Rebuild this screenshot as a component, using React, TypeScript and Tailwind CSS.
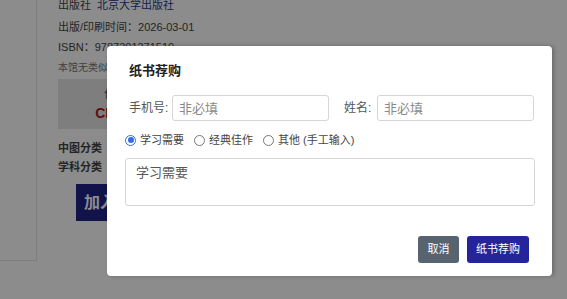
import React from "react";

const font = { fontFamily: '"Liberation Sans", "Noto Sans CJK SC", sans-serif' };

const Radio = ({ checked, label }: { checked?: boolean; label: string }) => (
  <label className="flex items-center gap-[4px] text-[11px] text-[#444]">
    <span
      className={
        checked
          ? "w-[11px] h-[11px] rounded-full border border-[#2f6fe0] flex items-center justify-center bg-white"
          : "w-[11px] h-[11px] rounded-full border border-[#777] bg-white"
      }
    >
      {checked && <span className="w-[6px] h-[6px] rounded-full bg-[#2f6fe0]" />}
    </span>
    {label}
  </label>
);

export default function App() {
  return (
    <div className="relative w-[567px] h-[299px] overflow-hidden bg-white" style={font}>
      {/* page behind */}
      <div className="flex h-[261px]">
        <div className="w-[37px] border-r border-b border-[#e5e5e5]" />
        <div className="pl-[21px] flex flex-col text-[11px] text-[#444]">
          <div className="h-[19px] -mt-[4px] flex items-center">
            出版社 <span className="ml-[6px] text-[#2a3a8a]">北京大学出版社</span>
          </div>
          <div className="mt-[2px] h-[20px] flex items-center">出版/印刷时间：2026-03-01</div>
          <div className="h-[20px] flex items-center">ISBN：9787301371510</div>
          <div className="h-[20px] flex items-center text-[10px] text-[#777]">本馆无类似书籍</div>
          <div className="mt-[2px] w-[104px] h-[50px] bg-[#e6e6e6] flex flex-col items-center justify-center">
            <span className="text-[12px] text-[#555]">价</span>
            <span className="text-[14px] font-bold text-[#b01818]">CNY</span>
          </div>
          <div className="mt-[10px] h-[19px] flex items-center font-bold">中图分类</div>
          <div className="h-[19px] flex items-center font-bold">学科分类</div>
          <div className="mt-[7px] ml-[18px] w-[120px] h-[37px] bg-[#1f2488] text-white text-[16px] font-bold flex items-center pl-[8px]">
            加入
          </div>
        </div>
      </div>

      {/* overlay */}
      <div className="absolute inset-0 bg-black/45" />

      {/* modal */}
      <div className="absolute left-[107px] top-[46px] w-[445px] h-[230px] bg-white rounded-[4px] shadow-[2px_0_4px_rgba(0,0,0,0.25)] px-[18px] pt-[15px]">
        <div className="pl-[4px] text-[13px] font-bold text-[#222] h-[20px] flex items-center">纸书荐购</div>
        <div className="mt-[14px] flex items-center pl-[4px] text-[12px] text-[#555]">
          <span className="w-[43px]">手机号:</span>
          <input
            className="w-[157px] h-[26px] border border-[#d6d6d6] rounded-[3px] px-[6px] text-[13px] outline-none placeholder:text-[#888]"
            placeholder="非必填"
          />
          <span className="ml-[15px] w-[33px]">姓名:</span>
          <input
            className="w-[157px] h-[26px] border border-[#d6d6d6] rounded-[3px] px-[6px] text-[13px] outline-none placeholder:text-[#888]"
            placeholder="非必填"
          />
        </div>
        <div className="mt-[8px] flex items-center gap-[10px] h-[22px]">
          <Radio checked label="学习需要" />
          <Radio label="经典佳作" />
          <Radio label="其他 (手工输入)" />
        </div>
        <textarea
          className="mt-[7px] block w-[410px] h-[48px] border border-[#d6d6d6] rounded-[3px] px-[10px] py-[4px] text-[13px] text-[#555] resize-none outline-none"
          defaultValue="学习需要"
        />
        <div className="mt-[30px] flex justify-end gap-[8px] pr-[5px]">
          <button className="w-[41px] h-[27px] rounded-[3px] bg-[#576470] text-white text-[11px]">取消</button>
          <button className="w-[62px] h-[27px] rounded-[3px] bg-[#26249a] text-white text-[11px]">纸书荐购</button>
        </div>
      </div>
    </div>
  );
}
